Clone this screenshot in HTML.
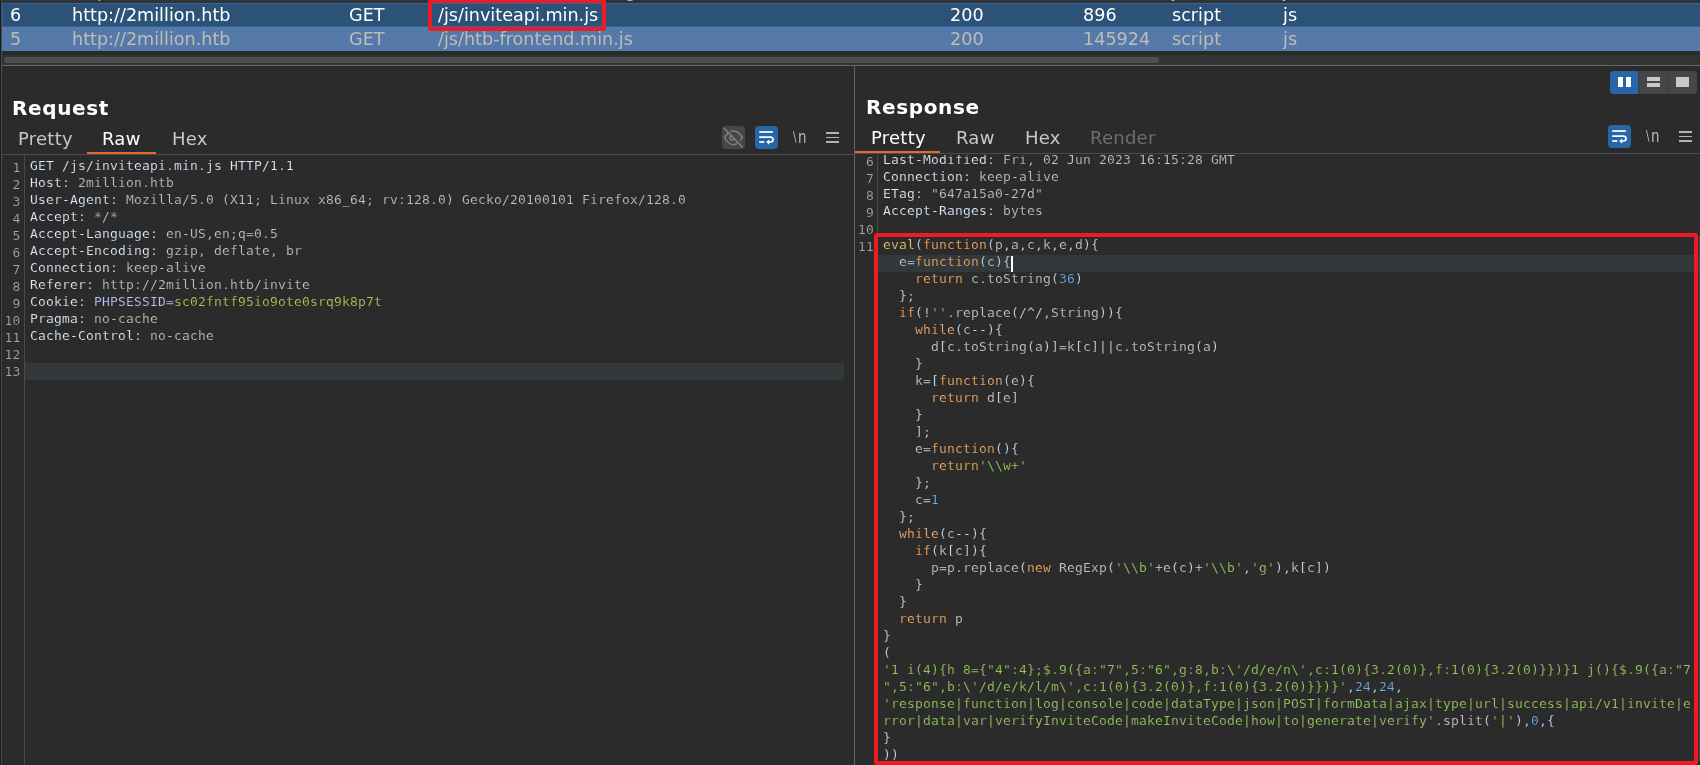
<!DOCTYPE html>
<html lang="en">
<head>
<meta charset="utf-8">
<title>Burp Suite - inviteapi.min.js</title>
<style>
html,body{margin:0;padding:0;}
body{width:1700px;height:765px;overflow:hidden;background:#2b2b2b;position:relative;
  font-family:"DejaVu Sans","Liberation Sans",sans-serif;color:#fff;}
.abs{position:absolute;}
.row,.title,.tab,.nl{will-change:transform;}
/* ---------- history table ---------- */
#tbl{left:0;top:0;width:1700px;height:51px;overflow:hidden;background:#323232;}
.row{position:absolute;left:2px;width:1698px;height:24px;font-size:17.6px;line-height:24px;white-space:nowrap;}
.row span{position:absolute;top:0;}
#r7{top:-21.5px;color:#bbb;background:transparent;}
#r6{top:3px;background:#2d5278;color:#fff;box-shadow:inset 0 1px 0 #2d66a3, inset 0 -1px 0 #2d66a3, inset 1px 0 0 #2d66a3;}
#r5{top:27px;background:#5579a8;color:#bfbcb8;}
.c1{left:8px}.c2{left:70px}.c3{left:347px}.c4{left:436px}.c5{left:948px}.c6{left:1081px}.c7{left:1170px}.c8{left:1281px}
#redA{left:428px;top:-1px;width:170px;height:24px;border:4px solid #ed1c24;border-radius:3px;}
/* ---------- scrollbar strip ---------- */
#hs{left:0;top:51px;width:1700px;height:14px;background:linear-gradient(#2a2a2a 0,#2a2a2a 4px,#313335 4px);}
#hsth{left:4px;top:57px;width:1155px;height:6px;border-radius:3px;background:#4e4f51;}
#hline{left:2px;top:65px;width:1698px;height:1px;background:#696969;}
#vline{left:854px;top:65px;width:1px;height:700px;background:#646464;}
#ledge{left:0;top:0;width:1px;height:765px;background:#1b1d20;}
#ledge2{left:1px;top:0;width:1px;height:765px;background:#4a4a4a;}
/* ---------- panel headers ---------- */
.title{font-weight:bold;font-size:20px;letter-spacing:0.5px;line-height:24px;color:#fff;white-space:nowrap;}
.tab{font-size:18px;letter-spacing:0.25px;line-height:22px;color:#c8c8c8;white-space:nowrap;}
.tab.on{color:#fff;}
.tab.dis{color:#6e6e6e;}
.ul{height:2px;background:#e8682c;}
.tline{height:1px;background:#4b4b4b;}
.ibox{width:23px;height:23px;border-radius:4px;}
.ham i{position:absolute;left:0;width:13px;height:1.5px;background:#b4b4b4;}
.nl{width:16px;height:22px;color:#bdbdbd;white-space:nowrap;}
.nl b{position:absolute;font-weight:normal;line-height:22px;}
.nl .bs{left:0;top:-0.6px;font-size:14px;transform:scaleX(.72);transform-origin:0 50%;}
.nl .nn{left:5.3px;top:0;font-size:18px;transform:scaleX(.74);transform-origin:0 50%;}
/* ---------- editors ---------- */
.ed{font-family:"DejaVu Sans Mono","Liberation Mono",monospace;font-size:13px;letter-spacing:0.173px;line-height:17px;white-space:pre;color:#bbbbbb;will-change:transform;-webkit-text-stroke:0.15px #2b2b2b;}
.ed div{height:17px;}
.ln{color:#a6a6a6;text-align:right;}
.h{color:#dcebfa}.v{color:#c4c1bc}
.pn{color:#bac4fb}.pv{color:#abc955}
.k{color:#f7ab60}.y{color:#eac566}.p{color:#c6d6e6}.i{color:#c8c6c2}.n{color:#66acea}.s{color:#97c75b}
.cur{background:#33383b;}
</style>
</head>
<body>
<!-- history table -->
<div id="tbl" class="abs">
  <div id="r7" class="row"><span class="c2">http://2million.htb</span><span class="c3">GET</span><span class="c4">/api/v1/invite/how/to/generate</span><span class="c5">200</span><span class="c6">249</span><span class="c7">json</span><span class="c8">js</span></div>
  <div id="r6" class="row"><span class="c1">6</span><span class="c2">http://2million.htb</span><span class="c3">GET</span><span class="c4">/js/inviteapi.min.js</span><span class="c5">200</span><span class="c6">896</span><span class="c7">script</span><span class="c8">js</span></div>
  <div id="r5" class="row"><span class="c1">5</span><span class="c2">http://2million.htb</span><span class="c3">GET</span><span class="c4">/js/htb-frontend.min.js</span><span class="c5">200</span><span class="c6">145924</span><span class="c7">script</span><span class="c8">js</span></div>
</div>
<div id="redA" class="abs"></div>
<div id="hs" class="abs"></div>
<div id="hsth" class="abs"></div>
<div id="hline" class="abs"></div>
<div id="vline" class="abs"></div>
<div id="ledge" class="abs"></div>
<div id="ledge2" class="abs"></div>

<!-- REQUEST header -->
<div class="abs title" style="left:12.4px;top:96px;letter-spacing:0.62px;">Request</div>
<div class="abs tab" style="left:18px;top:128px;">Pretty</div>
<div class="abs tab on" style="left:102px;top:128px;">Raw</div>
<div class="abs tab" style="left:171.5px;top:128px;">Hex</div>
<div class="abs ul" style="left:87px;top:152px;width:69px;"></div>
<div class="abs tline" style="left:2px;top:154px;width:852px;"></div>
<!-- request toolbar icons -->
<svg class="abs" style="left:722px;top:126px;" width="23" height="23" viewBox="0 0 23 23"><rect width="23" height="23" rx="4" fill="#464648"/><g stroke="#808080" stroke-width="1.45" fill="none" stroke-linecap="round" stroke-linejoin="round"><path d="M2 2L20 20.7"/><path d="M6.2 6.8L2.6 11.5Q6.4 18.7 11.3 18.7Q13.2 18.7 14.6 17.6"/><path d="M9.2 5.3Q10.3 5 11.5 5Q16.6 5 20.3 11.4L18.5 14.2"/><path d="M9.1 9.5A2.5 2.5 0 1 0 12.6 12.9"/></g></svg>
<svg class="abs" style="left:755px;top:126px;" width="23" height="23" viewBox="0 0 23 23"><rect width="23" height="23" rx="4" fill="#2866a7"/><g stroke="#fff" stroke-width="1.7" fill="none"><path d="M4.2 6H17.9"/><path d="M4.2 11.1H15.6a2.45 2.45 0 0 1 0 4.9H13.5"/><path d="M4.2 16H9.3"/></g><path d="M11.2 16.1l3-2.6v5.2z" fill="#fff"/></svg>
<div class="abs nl" style="left:793px;top:126px;"><b class="bs">\</b><b class="nn">n</b></div>
<div class="abs ham" style="left:826px;top:132px;width:13px;height:12px;"><i style="top:0"></i><i style="top:4.7px"></i><i style="top:9.4px"></i></div>

<!-- RESPONSE header -->
<div class="abs title" style="left:865.5px;top:95px;letter-spacing:0.62px;">Response</div>
<div class="abs tab on" style="left:870.6px;top:127px;">Pretty</div>
<div class="abs tab" style="left:955.6px;top:127px;">Raw</div>
<div class="abs tab" style="left:1024.6px;top:127px;">Hex</div>
<div class="abs tab dis" style="left:1090.4px;top:127px;">Render</div>
<div class="abs ul" style="left:855px;top:151px;width:85px;"></div>
<div class="abs tline" style="left:855px;top:153px;width:845px;"></div>
<!-- response toolbar icons -->
<div class="abs" style="left:1610px;top:71px;width:87px;height:23px;border-radius:4px;overflow:hidden;background:#3b3b3d;">
<div class="abs" style="left:0;top:0;width:28px;height:23px;background:#2866a7;"></div>
<div class="abs" style="left:29px;top:0;width:28px;height:23px;background:#464648;"></div>
<div class="abs" style="left:58px;top:0;width:29px;height:23px;background:#464648;"></div>
<div class="abs" style="left:8px;top:6px;width:5px;height:10px;background:#fff;"></div>
<div class="abs" style="left:16px;top:6px;width:5px;height:10px;background:#fff;"></div>
<div class="abs" style="left:37px;top:6px;width:13px;height:4px;background:#c8c8c8;"></div>
<div class="abs" style="left:37px;top:12px;width:13px;height:4px;background:#c8c8c8;"></div>
<div class="abs" style="left:66px;top:6px;width:13px;height:10px;background:#c8c8c8;"></div>
</div>
<svg class="abs" style="left:1608px;top:125px;" width="23" height="23" viewBox="0 0 23 23"><rect width="23" height="23" rx="4" fill="#2866a7"/><g stroke="#fff" stroke-width="1.7" fill="none"><path d="M4.2 6H17.9"/><path d="M4.2 11.1H15.6a2.45 2.45 0 0 1 0 4.9H13.5"/><path d="M4.2 16H9.3"/></g><path d="M11.2 16.1l3-2.6v5.2z" fill="#fff"/></svg>
<div class="abs nl" style="left:1646px;top:125px;"><b class="bs">\</b><b class="nn">n</b></div>
<div class="abs ham" style="left:1679px;top:131px;width:13px;height:12px;"><i style="top:0"></i><i style="top:4.7px"></i><i style="top:9.4px"></i></div>

<!-- REQUEST body -->
<div class="abs" style="left:24px;top:155px;width:1px;height:610px;background:#4a4a4a;"></div>
<div class="abs cur" style="left:25px;top:363px;width:819px;height:17px;"></div>
<div class="abs ed ln" style="left:0;top:159px;width:20.6px;"><div>1</div><div>2</div><div>3</div><div>4</div><div>5</div><div>6</div><div>7</div><div>8</div><div>9</div><div>10</div><div>11</div><div>12</div><div>13</div></div>
<div class="abs ed" style="left:30px;top:157px;"><div class="h">GET /js/inviteapi.min.js HTTP/1.1</div><div><span class="h">Host: </span><span class="v">2million.htb</span></div><div><span class="h">User-Agent: </span><span class="v">Mozilla/5.0 (X11; Linux x86_64; rv:128.0) Gecko/20100101 Firefox/128.0</span></div><div><span class="h">Accept: </span><span class="v">*/*</span></div><div><span class="h">Accept-Language: </span><span class="v">en-US,en;q=0.5</span></div><div><span class="h">Accept-Encoding: </span><span class="v">gzip, deflate, br</span></div><div><span class="h">Connection: </span><span class="v">keep-alive</span></div><div><span class="h">Referer: </span><span class="v">http://2million.htb/invite</span></div><div><span class="h">Cookie: </span><span class="pn">PHPSESSID=</span><span class="pv">sc02fntf95io9ote0srq9k8p7t</span></div><div><span class="h">Pragma: </span><span class="v">no-cache</span></div><div><span class="h">Cache-Control: </span><span class="v">no-cache</span></div><div></div><div></div></div>
<!-- RESPONSE body -->
<div class="abs" style="left:855px;top:155px;width:845px;height:610px;overflow:hidden;">
<div class="abs" style="left:22px;top:0;width:1px;height:611px;background:#4a4a4a;"></div>
<div class="abs cur" style="left:23px;top:100px;width:822px;height:17px;"></div>
<div class="abs" style="left:156px;top:101px;width:2px;height:16px;background:#fff;"></div>
<div class="abs ed ln" style="left:0;top:-2px;width:19px;"><div>6</div><div>7</div><div>8</div><div>9</div><div>10</div><div>11</div></div>
<div class="abs ed" style="left:28px;top:-4px;"><div><span class="h">Last-Modified: </span><span class="v">Fri, 02 Jun 2023 16:15:28 GMT</span></div><div><span class="h">Connection: </span><span class="v">keep-alive</span></div><div><span class="h">ETag: </span><span class="v">"647a15a0-27d"</span></div><div><span class="h">Accept-Ranges: </span><span class="v">bytes</span></div><div></div><div><span class="y">eval</span><span class="p">(</span><span class="k">function</span><span class="p">(</span><span class="i">p</span><span class="p">,</span><span class="i">a</span><span class="p">,</span><span class="i">c</span><span class="p">,</span><span class="i">k</span><span class="p">,</span><span class="i">e</span><span class="p">,</span><span class="i">d</span><span class="p">){</span></div><div>  <span class="i">e</span><span class="p">=</span><span class="k">function</span><span class="p">(</span><span class="i">c</span><span class="p">){</span></div><div>    <span class="k">return</span> <span class="i">c</span><span class="p">.</span><span class="i">toString</span><span class="p">(</span><span class="n">36</span><span class="p">)</span></div><div>  <span class="p">};</span></div><div>  <span class="k">if</span><span class="p">(!</span><span class="s">''</span><span class="p">.</span><span class="i">replace</span><span class="p">(/^/,</span><span class="i">String</span><span class="p">)){</span></div><div>    <span class="k">while</span><span class="p">(</span><span class="i">c</span><span class="p">--){</span></div><div>      <span class="i">d</span><span class="p">[</span><span class="i">c</span><span class="p">.</span><span class="i">toString</span><span class="p">(</span><span class="i">a</span><span class="p">)]=</span><span class="i">k</span><span class="p">[</span><span class="i">c</span><span class="p">]||</span><span class="i">c</span><span class="p">.</span><span class="i">toString</span><span class="p">(</span><span class="i">a</span><span class="p">)</span></div><div>    <span class="p">}</span></div><div>    <span class="i">k</span><span class="p">=[</span><span class="k">function</span><span class="p">(</span><span class="i">e</span><span class="p">){</span></div><div>      <span class="k">return</span> <span class="i">d</span><span class="p">[</span><span class="i">e</span><span class="p">]</span></div><div>    <span class="p">}</span></div><div>    <span class="p">];</span></div><div>    <span class="i">e</span><span class="p">=</span><span class="k">function</span><span class="p">(){</span></div><div>      <span class="k">return</span><span class="s">'\\w+'</span></div><div>    <span class="p">};</span></div><div>    <span class="i">c</span><span class="p">=</span><span class="n">1</span></div><div>  <span class="p">};</span></div><div>  <span class="k">while</span><span class="p">(</span><span class="i">c</span><span class="p">--){</span></div><div>    <span class="k">if</span><span class="p">(</span><span class="i">k</span><span class="p">[</span><span class="i">c</span><span class="p">]){</span></div><div>      <span class="i">p</span><span class="p">=</span><span class="i">p</span><span class="p">.</span><span class="i">replace</span><span class="p">(</span><span class="k">new</span> <span class="i">RegExp</span><span class="p">(</span><span class="s">'\\b'</span><span class="p">+</span><span class="i">e</span><span class="p">(</span><span class="i">c</span><span class="p">)+</span><span class="s">'\\b'</span><span class="p">,</span><span class="s">'g'</span><span class="p">),</span><span class="i">k</span><span class="p">[</span><span class="i">c</span><span class="p">])</span></div><div>    <span class="p">}</span></div><div>  <span class="p">}</span></div><div>  <span class="k">return</span> <span class="i">p</span></div><div><span class="p">}</span></div><div><span class="p">(</span></div><div><span class="s">'1 i(4){h 8={"4":4};$.9({a:"7",5:"6",g:8,b:\'/d/e/n\',c:1(0){3.2(0)},f:1(0){3.2(0)}})}1 j(){$.9({a:"7</span></div><div><span class="s">",5:"6",b:\'/d/e/k/l/m\',c:1(0){3.2(0)},f:1(0){3.2(0)}})}'</span><span class="p">,</span><span class="n">24</span><span class="p">,</span><span class="n">24</span><span class="p">,</span></div><div><span class="s">'response|function|log|console|code|dataType|json|POST|formData|ajax|type|url|success|api/v1|invite|e</span></div><div><span class="s">rror|data|var|verifyInviteCode|makeInviteCode|how|to|generate|verify'</span><span class="p">.</span><span class="i">split</span><span class="p">(</span><span class="s">'|'</span><span class="p">),</span><span class="n">0</span><span class="p">,{</span></div><div><span class="p">}</span></div><div><span class="p">))</span></div></div>
</div>
<div class="abs" style="left:1699px;top:236px;width:1px;height:525px;background:#4b4b4b;"></div>
<div class="abs" id="redB" style="left:874px;top:233px;width:816px;height:524px;border:4px solid #ed1c24;border-radius:3px;"></div>
</body>
</html>
